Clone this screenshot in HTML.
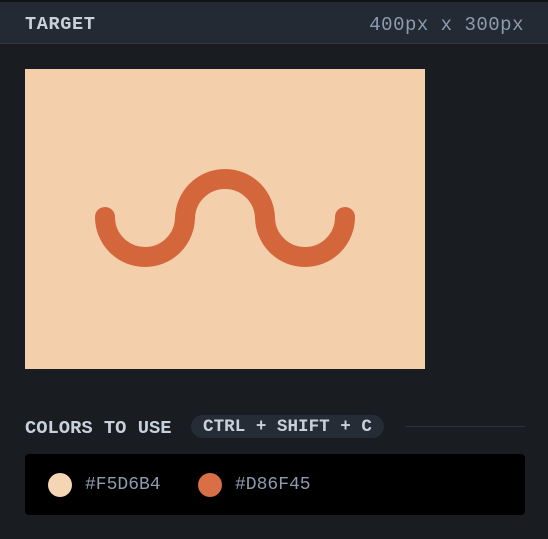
<!DOCTYPE html>
<html><head><style>
body{margin:0;width:548px;height:539px;background:#191c21;font-family:"Liberation Mono",monospace;overflow:hidden;position:relative}
.top{position:absolute;left:0;top:0;width:548px;height:2px;background:#111316}
.hdr{position:absolute;left:0;top:2px;width:548px;height:41px;background:#232a33;border-bottom:1px solid #313840}
.t1{position:absolute;left:25px;top:12px;font-size:18.6px;font-weight:bold;color:#c9d0db;letter-spacing:0.6px}
.t2{position:absolute;right:24px;top:12px;font-size:19px;color:#8b9bb0;letter-spacing:0.5px}
.canvas{position:absolute;left:25px;top:69px;width:400px;height:300px;background:#f3cfab}
.lbl{position:absolute;left:25px;top:417px;font-size:18.8px;font-weight:bold;color:#c9d0db}
.pill{position:absolute;left:191px;top:415px;width:193px;height:23px;border-radius:12px;background:#252c35;color:#c9d0db;font-size:17.6px;font-weight:bold;line-height:24px;text-align:center}
.line{position:absolute;left:405px;top:426px;width:120px;height:1px;background:#2c3138}
.panel{position:absolute;left:25px;top:454px;width:500px;height:61px;background:#000;border-radius:4px}
.c{position:absolute;top:19px;width:24px;height:24px;border-radius:50%}
.h{position:absolute;top:21px;font-size:18px;color:#8b9bb0}
</style></head><body>
<div class="top"></div>
<div class="hdr"><div class="t1">TARGET</div><div class="t2">400px x 300px</div></div>
<div class="canvas"><svg width="400" height="300"><path d="M80,148 A40,40 0 0 0 160,148 L160,150 A40,40 0 0 1 240,150 L240,148 A40,40 0 0 0 320,148" fill="none" stroke="#D4663C" stroke-width="20" stroke-linecap="round"/></svg></div>
<div class="lbl">COLORS TO USE</div>
<div class="pill">CTRL + SHIFT + C</div>
<div class="line"></div>
<div class="panel">
<div class="c" style="left:23px;background:#F5D6B4"></div><div class="h" style="left:60px">#F5D6B4</div>
<div class="c" style="left:173px;background:#D86F45"></div><div class="h" style="left:210px">#D86F45</div>
</div>
</body></html>
